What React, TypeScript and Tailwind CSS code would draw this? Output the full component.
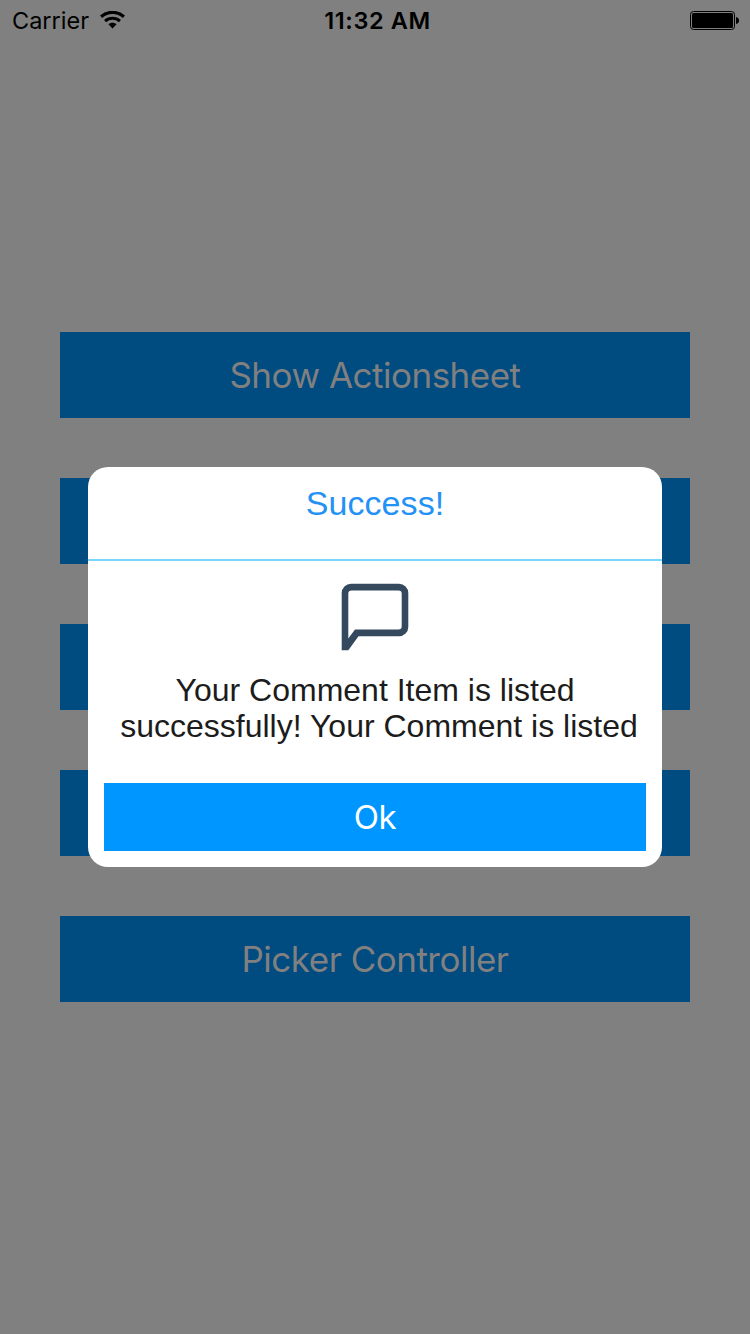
const actions = ['Show Actionsheet', '', '', '', 'Picker Controller'];

function StatusBar() {
  return (
    <header className="grid h-10 grid-cols-3 items-center pl-3 pr-[11px] text-[23.5px] text-black">
      <div className="flex items-center gap-[11px]">
        <span className="pt-0.5">Carrier</span>
        <svg width="25" height="18" viewBox="0 0 25 18" fill="none" stroke="#000" strokeWidth="3.2">
          <path d="M1.1 5.7C7.6 -.1 17.4 -.1 23.9 5.7" />
          <path d="M5.1 10.1C9.4 6.3 15.6 6.3 19.9 10.1" />
          <path d="M8.5 13.2C10.8 11.2 14.2 11.2 16.5 13.2L12.5 17.4Z" fill="#000" stroke="none" />
        </svg>
      </div>
      <span className="whitespace-nowrap pl-1 pt-0.5 text-center font-semibold tracking-[0.6px]">11:32 AM</span>
      <svg className="justify-self-end" width="49" height="19" viewBox="0 0 49 19">
        <rect x=".5" y=".5" width="44" height="18" rx="3" fill="none" stroke="#000" />
        <rect x="2" y="2" width="41" height="15" rx="1.5" />
        <path d="M46 6Q49 6.5 49 9.5T46 13Z" />
      </svg>
    </header>
  );
}

function Dialog() {
  return (
    <section className="flex h-[400px] w-[574px] flex-col rounded-[20px] bg-white font-['Liberation_Sans',sans-serif]">
      <h1 className="h-[94px] border-b-2 border-[#76d6ff] pt-4 text-center text-[34px] leading-10 tracking-[0.1px] text-[#2492f4]">
        Success!
      </h1>
      <svg className="mx-auto mt-[22px] shrink-0" width="68" height="68" viewBox="0 0 68 68">
        <path
          d="M10 .7H58A9.3 9.3 0 0 1 67.3 10V44A9.3 9.3 0 0 1 58 53.3H17.5L7.3 67.3H.7V10A9.3 9.3 0 0 1 10 .7ZM10.5 7.5A3.2 3.2 0 0 0 7.3 10.7V55.5L14 46.5H57.5A3.2 3.2 0 0 0 60.7 43.3V10.7A3.2 3.2 0 0 0 57.5 7.5Z"
          fill="#34495e"
          fillRule="evenodd"
        />
      </svg>
      <p className="mt-[21px] whitespace-nowrap text-center text-[32px] leading-9 text-[#1c1c1c]">
        <span className="block">Your Comment Item is listed</span>
        <span className="block pl-2">successfully! Your Comment is listed</span>
      </p>
      <button className="mx-4 mb-4 mt-auto h-[68px] bg-[#0096ff] pt-0.5 font-['Inter',sans-serif] text-[33px] tracking-[-0.4px] text-white">
        Ok
      </button>
    </section>
  );
}

export default function App() {
  return (
    <div className="relative h-[1334px] w-[750px] bg-[#808080] font-['Inter',sans-serif]">
      <StatusBar />
      <main className="flex flex-col gap-[60px] px-[60px] pt-[292px]">
        {actions.map((label, i) => (
          <button key={i} className="h-[86px] bg-[#004b80] text-[35px] tracking-[-0.5px] text-[#808080]">
            {label}
          </button>
        ))}
      </main>
      <div className="absolute inset-0 flex items-center justify-center">
        <Dialog />
      </div>
    </div>
  );
}
